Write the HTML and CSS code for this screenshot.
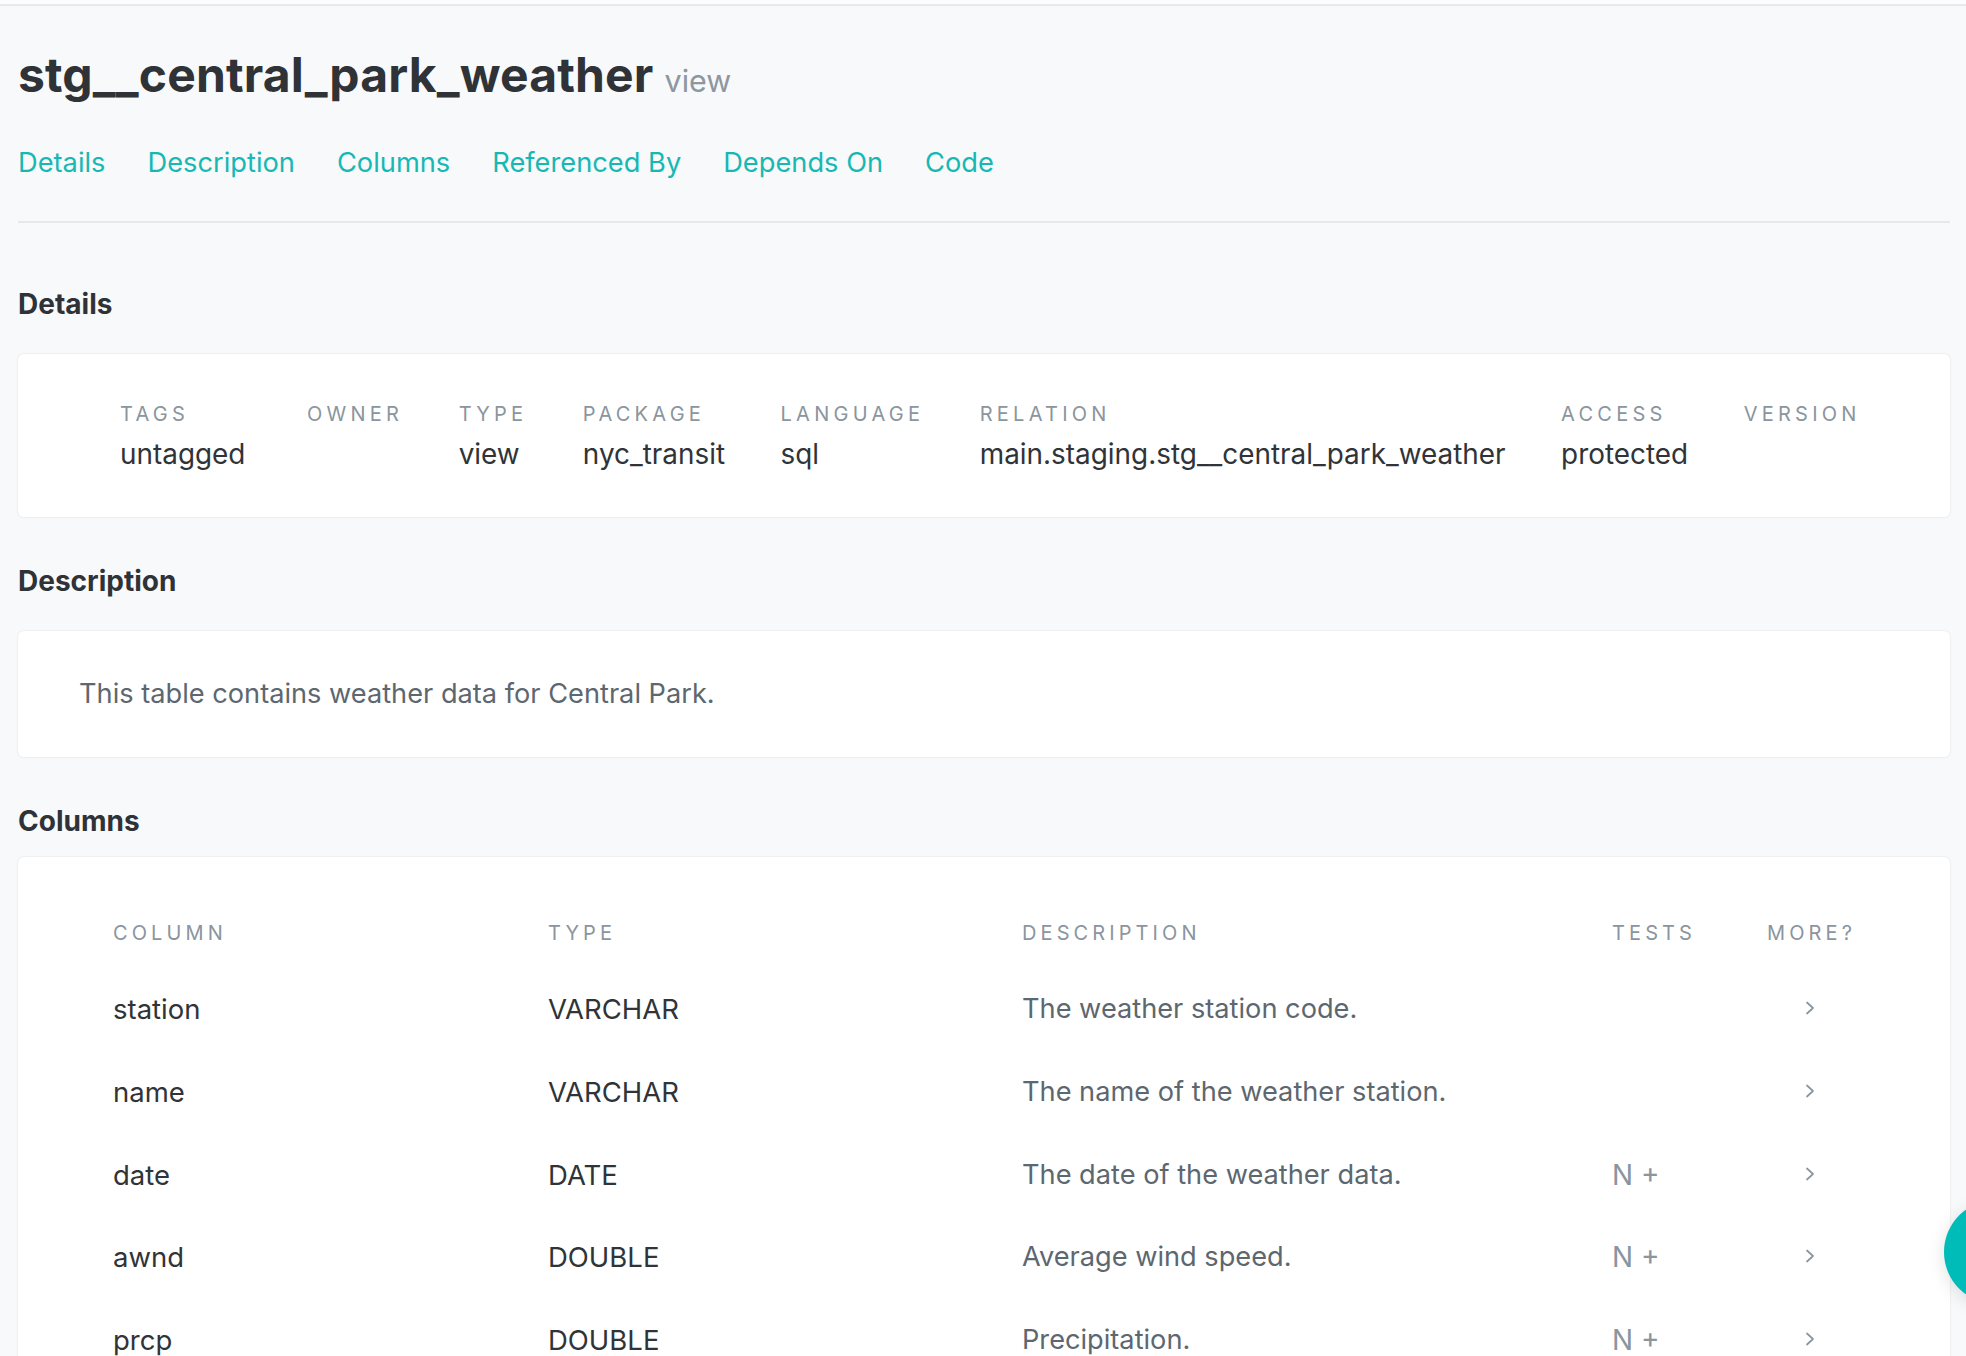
FILE: index.html
```html
<!DOCTYPE html>
<html lang="en">
<head>
<meta charset="utf-8">
<title>stg__central_park_weather</title>
<link rel="stylesheet" href="styles.css">
</head>
<body>
<div class="topbar"></div>
<main class="page">
  <header class="model-header">
    <h1 class="title">stg__central_park_weather<span class="kind">view</span></h1>
    <nav class="tabs">
      <a class="tab" href="#details">Details</a>
      <a class="tab" href="#description">Description</a>
      <a class="tab" href="#columns">Columns</a>
      <a class="tab" href="#referenced-by">Referenced By</a>
      <a class="tab" href="#depends-on">Depends On</a>
      <a class="tab" href="#code">Code</a>
    </nav>
  </header>

  <section class="section section-details" id="details">
    <h2 class="section-title">Details</h2>
    <div class="card card-details">
      <dl class="meta">
        <div class="meta-item meta-tags"><dt>Tags</dt><dd>untagged</dd></div>
        <div class="meta-item"><dt>Owner</dt><dd></dd></div>
        <div class="meta-item"><dt>Type</dt><dd>view</dd></div>
        <div class="meta-item"><dt>Package</dt><dd>nyc_transit</dd></div>
        <div class="meta-item"><dt>Language</dt><dd>sql</dd></div>
        <div class="meta-item"><dt>Relation</dt><dd>main.staging.stg__central_park_weather</dd></div>
        <div class="meta-item"><dt>Access</dt><dd>protected</dd></div>
        <div class="meta-item"><dt>Version</dt><dd></dd></div>
      </dl>
    </div>
  </section>

  <section class="section" id="description">
    <h2 class="section-title">Description</h2>
    <div class="card card-description">
      <p class="desc-text">This table contains weather data for Central Park.</p>
    </div>
  </section>

  <section class="section section-columns" id="columns">
    <h2 class="section-title">Columns</h2>
    <div class="card card-columns">
      <div class="col-table">
        <div class="col-row col-head">
          <div class="th">Column</div>
          <div class="th">Type</div>
          <div class="th">Description</div>
          <div class="th">Tests</div>
          <div class="th th-more">More?</div>
        </div>
        <div class="col-row">
          <div class="td td-name">station</div>
          <div class="td td-type">VARCHAR</div>
          <div class="td td-desc">The weather station code.</div>
          <div class="td td-tests"></div>
          <div class="td td-more"><svg class="chev" width="10" height="14" viewBox="0 0 10 14"><polyline points="2,1.5 8,7 2,12.5"/></svg></div>
        </div>
        <div class="col-row">
          <div class="td td-name">name</div>
          <div class="td td-type">VARCHAR</div>
          <div class="td td-desc">The name of the weather station.</div>
          <div class="td td-tests"></div>
          <div class="td td-more"><svg class="chev" width="10" height="14" viewBox="0 0 10 14"><polyline points="2,1.5 8,7 2,12.5"/></svg></div>
        </div>
        <div class="col-row">
          <div class="td td-name">date</div>
          <div class="td td-type">DATE</div>
          <div class="td td-desc">The date of the weather data.</div>
          <div class="td td-tests">N +</div>
          <div class="td td-more"><svg class="chev" width="10" height="14" viewBox="0 0 10 14"><polyline points="2,1.5 8,7 2,12.5"/></svg></div>
        </div>
        <div class="col-row">
          <div class="td td-name">awnd</div>
          <div class="td td-type">DOUBLE</div>
          <div class="td td-desc">Average wind speed.</div>
          <div class="td td-tests">N +</div>
          <div class="td td-more"><svg class="chev" width="10" height="14" viewBox="0 0 10 14"><polyline points="2,1.5 8,7 2,12.5"/></svg></div>
        </div>
        <div class="col-row">
          <div class="td td-name">prcp</div>
          <div class="td td-type">DOUBLE</div>
          <div class="td td-desc">Precipitation.</div>
          <div class="td td-tests">N +</div>
          <div class="td td-more"><svg class="chev" width="10" height="14" viewBox="0 0 10 14"><polyline points="2,1.5 8,7 2,12.5"/></svg></div>
        </div>
      </div>
    </div>
  </section>
</main>
<button class="fab" aria-label="Open lineage graph"></button>
</body>
</html>
```

FILE: styles.css
```css
* { box-sizing: border-box; }

html, body {
  margin: 0;
  padding: 0;
}

body {
  background: #f8f9fb;
  font-family: Inter, "Noto Sans", "Liberation Sans", sans-serif;
  color: #303438;
  overflow: hidden;
  height: 1356px;
}

.topbar {
  height: 6px;
  background: #fdfdfe;
  border-bottom: 2px solid #e7e9ec;
}

.page {
  padding: 0 16px 0 18px;
}

/* header */
.title {
  margin: 41px 0 0;
  font-size: 48px;
  line-height: 56px;
  font-weight: 700;
  color: #2f3337;
  letter-spacing: 0.15px;
}

.kind {
  margin-left: 11px;
  font-size: 30.5px;
  font-weight: 400;
  color: #8d979f;
  letter-spacing: 0;
}

.tabs {
  display: flex;
  gap: 42px;
  margin-top: 34px;
  padding-bottom: 38px;
  border-bottom: 2px solid #e6e8eb;
}

.tab {
  font-size: 27.25px;
  line-height: 40px;
  color: #17b8b3;
  text-decoration: none;
}

/* sections */
.section-title {
  margin: 44px 0 0;
  font-size: 28px;
  line-height: 40px;
  font-weight: 700;
  color: #2f3337;
}

.section-details .section-title { margin-top: 61px; }

.card {
  margin-top: 30px;
  background: #ffffff;
  border-radius: 6px;
  box-shadow: 0 0 0 1px #eef0f2, 0 1px 3px rgba(20, 30, 40, 0.04);
}

.section-columns .card { margin-top: 16px; }

/* details card */
.card-details {
  padding: 46px 24px 43px 102px;
}

.meta {
  display: flex;
  gap: 55.5px;
  margin: 0;
}

.meta-tags { margin-right: 6px; }

.meta-item dt {
  font-size: 20px;
  line-height: 28px;
  letter-spacing: 4.25px;
  text-transform: uppercase;
  color: #8a959e;
}

.meta-item dd {
  margin: 6px 0 0;
  font-size: 27.9px;
  line-height: 40px;
  min-height: 40px;
  color: #303438;
}

/* description card */
.card-description {
  padding: 43px 40px 43px 61px;
}

.desc-text {
  margin: 0;
  font-size: 27.2px;
  line-height: 40px;
  color: #5d676f;
}

/* columns card */
.card-columns {
  padding: 41px 0 0 95px;
  min-height: 520px;
}

.col-row {
  display: grid;
  grid-template-columns: 435px 474px 590px 155px 86px;
  padding: 21.2px 0 21.6px;
}

.col-head { padding: 21px 0 20.8px; }

.th {
  font-size: 20px;
  line-height: 28px;
  letter-spacing: 4.1px;
  text-transform: uppercase;
  color: #8a959e;
  white-space: nowrap;
}

.td {
  font-size: 27.5px;
  line-height: 40px;
  color: #303438;
}

.td-desc {
  font-size: 27.2px;
  color: #5d676f;
}

.td-tests {
  font-size: 28px;
  color: #8a959e;
}

.td-more {
  display: flex;
  align-items: center;
  justify-content: center;
  padding-bottom: 2px;
}

.chev {
  fill: none;
  stroke: #8a959e;
  stroke-width: 1.7;
  stroke-linecap: round;
  stroke-linejoin: round;
}

/* floating action button */
.fab {
  position: fixed;
  left: 1944px;
  top: 1200px;
  width: 104px;
  height: 104px;
  border: 0;
  border-radius: 50%;
  background: #00bcb9;
  box-shadow: 0 4px 18px rgba(0, 0, 0, 0.12);
  padding: 0;
}
```
